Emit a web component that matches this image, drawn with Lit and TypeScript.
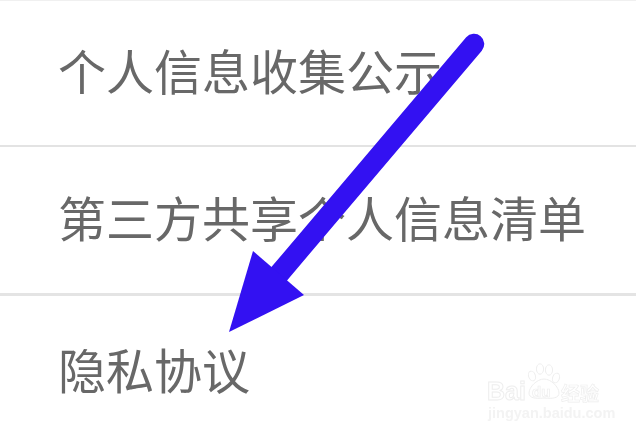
import { LitElement, html, css, svg } from "lit";
import { customElement } from "lit/decorators.js";

const ROWS = ["个人信息收集公示", "第三方共享个人信息清单", "隐私协议"];

@customElement("app-root")
export class AppRoot extends LitElement {
  static styles = css`
    :host {
      display: block;
      position: relative;
      width: 636px;
      height: 432px;
      overflow: hidden;
      background: #fff;
      font-family: "Liberation Sans", "Noto Sans CJK SC", sans-serif;
    }
    .list {
      display: flex;
      flex-direction: column;
      border-top: 1px solid #f0f0f0;
      will-change: transform;
    }
    .row {
      display: flex;
      align-items: center;
      box-sizing: border-box;
      padding-left: 58px;
      font-size: 48px;
      line-height: 1;
      color: #686868;
      white-space: nowrap;
    }
    .r0 { height: 146px; padding-top: 1px; border-bottom: 2px solid #e3e3e3; }
    .r1 { height: 149px; padding-top: 2px; border-bottom: 3px solid #e4e4e4; }
    .r2 { height: 136px; padding-top: 18px; }
    .arrow { position: absolute; inset: 0; width: 636px; height: 432px; }
    .mark {
      position: absolute;
      left: 486px;
      top: 362px;
      width: 120px;
      height: 60px;
    }
    .bai, .jy, .cn, .du { position: absolute; white-space: nowrap; }
    .bai {
      left: 1px; top: 17px;
      font: 700 25px/1 "Liberation Sans", sans-serif;
      color: #fff;
      -webkit-text-stroke: 1px #eeeeee;
    }
    .du {
      left: 46px; top: 22px;
      font: 700 15px/1 "Liberation Sans", sans-serif;
      color: #fff;
      -webkit-text-stroke: 0.7px #eeeeee;
    }
    .cn {
      left: 75px; top: 21px;
      font: 700 19px/1 "Noto Sans CJK SC", sans-serif;
      color: #fff;
      -webkit-text-stroke: 0.7px #eeeeee;
    }
    .jy {
      left: 2px; top: 44px;
      font: 700 14.5px/1 "Liberation Sans", sans-serif;
      color: #f3f3f3;
    }
    .paw { position: absolute; left: 40px; top: 0; width: 36px; height: 40px; }
  `;

  render() {
    return html`
      <div class="list">
        ${ROWS.map((t, i) => html`<div class="row r${i}">${t}</div>`)}
      </div>
      <svg class="arrow" viewBox="0 0 636 432">
        <path d="M474 44L279 274" stroke="#3311f2" stroke-width="20.5" stroke-linecap="round" fill="none"/>
        <path d="M229 332L253 251L304 295Z" fill="#3311f2"/>
      </svg>
      <div class="mark">
        <span class="bai">Bai</span>
        <svg class="paw" viewBox="0 0 36 40" fill="#fff" stroke="#eeeeee" stroke-width="1">
          ${svg`
            <ellipse cx="6" cy="14" rx="3.4" ry="5" transform="rotate(-20 6 14)"/>
            <ellipse cx="14" cy="7" rx="3.6" ry="5.2"/>
            <ellipse cx="23" cy="8" rx="3.6" ry="5.2"/>
            <ellipse cx="30" cy="16" rx="3.4" ry="5" transform="rotate(20 30 16)"/>
            <path d="M18 17C11 17 3 25 3 31C3 36 9 37 18 36C27 37 33 36 33 31C33 25 25 17 18 17Z"/>
          `}
        </svg>
        <span class="du">du</span>
        <span class="cn">经验</span>
        <span class="jy">jingyan.baidu.com</span>
      </div>
    `;
  }
}
